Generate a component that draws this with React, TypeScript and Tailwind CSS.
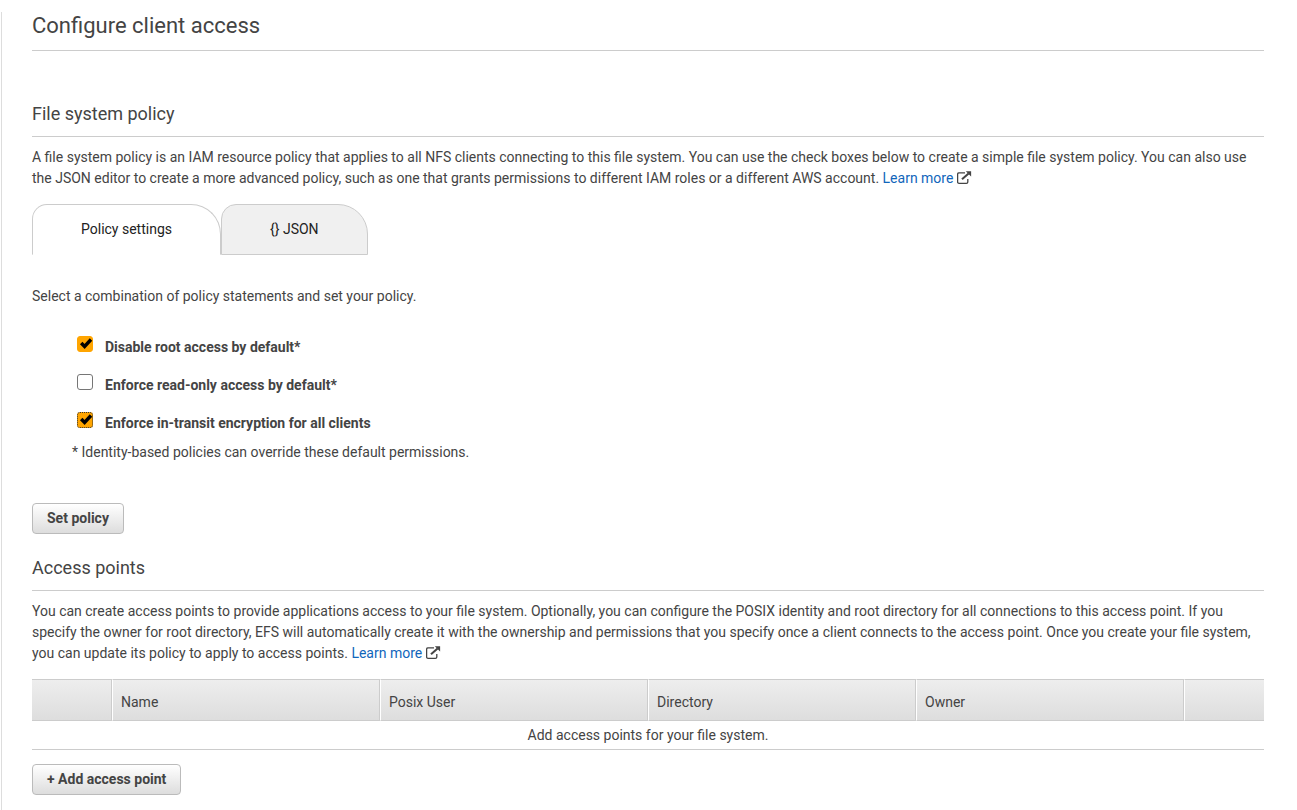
import { useState } from "react";
import type { ReactNode } from "react";

function ExternalIcon() {
  return (
    <svg
      className="inline-block h-[14px] w-[15px] align-[-2px] text-[#444]"
      viewBox="0 0 15 14"
      fill="none"
      aria-hidden="true"
    >
      <path
        d="M8 1.9H2Q.6 1.9 .6 3.3V11Q.6 12.4 2 12.4H9.4Q10.8 12.4 10.8 11V8"
        stroke="currentColor"
        strokeWidth="1.3"
      />
      <path d="M5 8.3 11.6 2.4" stroke="currentColor" strokeWidth="2" />
      <path d="M8.8 .3H14.1V5.6Z" fill="currentColor" />
    </svg>
  );
}

function LearnMore() {
  return (
    <>
      <a href="#learn-more" className="text-[#1166bb]">
        Learn more
      </a>{" "}
      <ExternalIcon />
    </>
  );
}

function SectionTitle({ children }: { children: ReactNode }) {
  return (
    <h2 className="border-b border-[#ccc] pb-[9px] text-lg leading-[27px]">{children}</h2>
  );
}

function ActionButton({ children }: { children: ReactNode }) {
  return (
    <button
      type="button"
      className="rounded-[4px] border border-[#bbb] bg-linear-to-b from-white to-[#ddd] px-3.5 py-1 font-bold text-[#444]"
    >
      {children}
    </button>
  );
}

type PolicyOptionProps = { id: string; label: string; initial: boolean; dotted?: boolean };

function PolicyOption({ id, label, initial, dotted = false }: PolicyOptionProps) {
  const [checked, setChecked] = useState(initial);
  return (
    <div className="flex gap-3">
      <span className="relative size-4 shrink-0">
        <input
          id={id}
          type="checkbox"
          checked={checked}
          onChange={(e) => setChecked(e.target.checked)}
          className={
            "block size-4 appearance-none rounded-[3px] border border-[#767676] bg-white checked:bg-[#ffa500] " +
            (dotted
              ? "checked:border-dotted checked:border-[#333]"
              : "checked:border-[#ffa500]")
          }
        />
        {checked && (
          <svg
            className="pointer-events-none absolute inset-0 size-4"
            viewBox="0 0 16 16"
            fill="none"
            aria-hidden="true"
          >
            <path d="M4.2 7 7.6 10.5 14 3.5" stroke="black" strokeWidth="3.4" />
          </svg>
        )}
      </span>
      <label htmlFor={id} className="font-bold leading-[23px]">
        {label}
      </label>
    </div>
  );
}

const columns = ["Name", "Posix User", "Directory", "Owner"];

export default function App() {
  const [tab, setTab] = useState("settings");
  const tabClass = (name: string) =>
    "rounded-tl-[15px] rounded-tr-[30px] border border-[#ccc] px-12 pb-3.5 pt-3.5 text-[#222] " +
    (tab === name ? "border-b-white bg-white" : "bg-[#f0f0f0]");

  return (
    <main className="ml-px mt-3 border-l border-[#ddd] pb-4 pl-[30px] pr-[33px] font-[Roboto,sans-serif] text-sm leading-[21px] text-[#444]">
      <h1 className="border-b border-[#ccc] pb-[11px] text-[22px] leading-[27px]">
        Configure client access
      </h1>

      <section className="mt-[49px]">
        <SectionTitle>File system policy</SectionTitle>
        <p className="mt-2.5">
          A file system policy is an IAM resource policy that applies to all NFS clients connecting
          to this file system. You can use the check boxes below to create a simple file system
          policy. You can also use the JSON editor to create a more advanced policy, such as one
          that grants permissions to different IAM roles or a different AWS account. <LearnMore />
        </p>

        <div role="tablist" className="mt-[15px] flex">
          <button
            type="button"
            role="tab"
            aria-selected={tab === "settings"}
            onClick={() => setTab("settings")}
            className={tabClass("settings")}
          >
            Policy settings
          </button>
          <button
            type="button"
            role="tab"
            aria-selected={tab === "json"}
            onClick={() => setTab("json")}
            className={tabClass("json")}
          >
            {"{} JSON"}
          </button>
        </div>

        <p className="mt-[31px]">Select a combination of policy statements and set your policy.</p>
        <div className="mt-[29px] flex flex-col gap-[15px] pl-[45px]">
          <PolicyOption id="root-access" label="Disable root access by default*" initial={true} />
          <PolicyOption
            id="read-only"
            label="Enforce read-only access by default*"
            initial={false}
          />
          <PolicyOption
            id="encryption"
            label="Enforce in-transit encryption for all clients"
            initial={true}
            dotted
          />
        </div>
        <p className="mb-10 mt-[7px] pl-10">
          * Identity-based policies can override these default permissions.
        </p>
        <ActionButton>Set policy</ActionButton>
      </section>

      <section className="mt-5">
        <SectionTitle>Access points</SectionTitle>
        <p className="mt-2.5">
          You can create access points to provide applications access to your file system.
          Optionally, you can configure the POSIX identity and root directory for all connections to
          this access point. If you specify the owner for root directory, EFS will automatically
          create it with the ownership and permissions that you specify once a client connects to
          the access point. Once you create your file system, you can update its policy to apply to
          access points. <LearnMore />
        </p>

        <table className="mb-3.5 mt-[15px] w-full table-fixed border-separate border-spacing-0">
          <thead>
            <tr className="bg-linear-to-b from-[#eee] to-[#ddd]">
              <th className="h-[42px] w-20 border-y border-r border-[#ccc]" aria-label="Select" />
              {columns.map((name) => (
                <th
                  key={name}
                  className="border border-[#ccc] border-l-white px-2 pt-1 text-left font-normal"
                >
                  {name}
                </th>
              ))}
              <th
                className="w-20 border-y border-l border-[#ccc] border-l-white"
                aria-label="Actions"
              />
            </tr>
          </thead>
          <tbody>
            <tr>
              <td colSpan={6} className="border-b border-[#ccc] pb-[3px] pt-1 text-center">
                Add access points for your file system.
              </td>
            </tr>
          </tbody>
        </table>
        <ActionButton>+ Add access point</ActionButton>
      </section>
    </main>
  );
}
